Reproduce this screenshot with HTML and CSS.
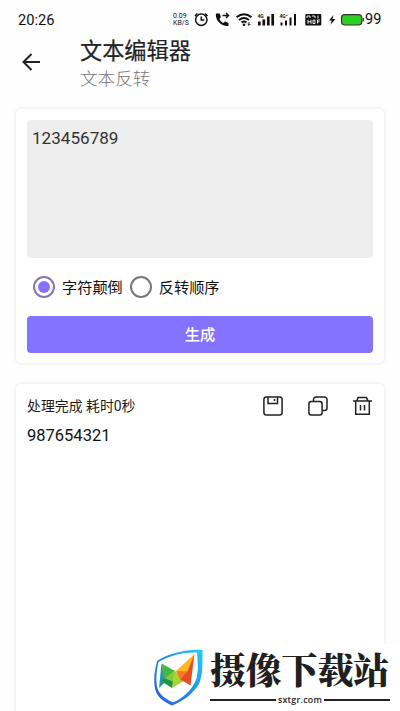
FILE: index.html
```html
<!DOCTYPE html>
<html lang="zh-CN">
<head>
<meta charset="utf-8">
<title>文本编辑器</title>
<link rel="stylesheet" href="styles.css">
</head>
<body>
<header class="status">
  <span class="time">20:26</span>
  <div class="speed"><span>0.09</span><span>KB/S</span></div>
  <svg class="indicators" width="175" height="20" viewBox="190 10 175 20" fill="none" stroke="#111" stroke-width="1.5">
    <circle cx="201.3" cy="19.8" r="5.7"/><path d="M201.3 16.500v3.600h3M195 16l2.400-2.500M207.500 16l-2.400-2.500"/>
    <path d="M216 13.500c-1.200 6.500 5 13 12.500 12.500v-3l-3.300-1.500-2 1.500c-1.800-.9-3-2.300-3.800-4l1.500-2-1.200-3.500z" fill="#111" stroke="none"/>
    <path d="M222.500 15.500h5.500M226 13l2.500 2.500-2.500 2.500"/>
    <path d="M236.500 17.200q7.500-6 15 0M239 20q5-4 10 0M241.500 22.600q2.500-2 5 0" stroke-width="1.900"/><circle cx="244" cy="24.700" r="1.300" fill="#111" stroke="none"/><path d="M249 22v3M247.600 24l1.400 1.400 1.400-1.400" stroke-width="1"/>
    <path d="M259.300 25.500v-4M263.800 25.500v-6M268.300 25.500v-9M272.700 25.500v-11.500" stroke-width="2.700"/>
    <path d="M281.500 25.500v-3M286 25.500v-5M290.500 25.500v-8M295 25.500v-11.500" stroke-width="2"/>
    <g fill="#111" stroke="none" class="tiny"><text x="257.500" y="18">4G</text><text x="279.500" y="18">4G⁺</text></g>
    <rect x="305.300" y="14" width="16" height="11.500" rx="1" fill="#111" stroke="none"/>
    <path d="M307 18v-2h3v2M312 16h3v2M318 15.500v3M308 19.800v4M311 19.800v4M308 21.800h3M313 20v3.500h2v-3.500zM320 20h-2.500v3.500M317.500 21.800h2" stroke="#fff" stroke-width=".9"/>
    <path d="M333.500 15l-4.500 5.500h2.700l-1.200 4.300 4.900-5.800h-2.900z" fill="#111" stroke="none"/>
    <rect x="341.500" y="14.600" width="20.300" height="10.400" rx="3.500" fill="#2fcc24" stroke="#333" stroke-width="1.200"/><path d="M363.300 18v3.500" stroke="#333" stroke-width="1.300"/>
  </svg>
  <span class="level">99</span>
</header>
<div class="appbar">
  <svg class="back" width="20" height="20" viewBox="0 0 20 20" fill="none" stroke="#222" stroke-width="2"><path d="M19 10H2.500M10.500 2L2.500 10l8 8"/></svg>
  <div><h1>文本编辑器</h1><h2>文本反转</h2></div>
</div>
<main>
  <section class="card form">
    <div class="input">123456789</div>
    <div class="options">
      <label class="option selected"><i class="radio"></i><span>字符颠倒</span></label>
      <label class="option"><i class="radio"></i><span>反转顺序</span></label>
    </div>
    <div class="generate">生成</div>
  </section>
  <section class="card result">
    <div class="resulthead">
      <span class="message">处理完成 耗时0秒</span>
      <div class="actions">
        <svg width="20" height="20" viewBox="0 0 20 20"><rect x=".9" y=".9" width="18.200" height="18.200" rx="2.500"/><path d="M5 1v6.500h9.500V1M11.500 3v2"/></svg>
        <svg width="20" height="20" viewBox="0 0 20 20"><rect x=".9" y="5.500" width="13.200" height="13.600" rx="2.500"/><path d="M5.500 5V3.500a2.500 2.500 0 0 1 2.500-2.500h8.500a2.500 2.500 0 0 1 2.500 2.500v8.500a2.500 2.500 0 0 1-2.500 2.500H14.500"/></svg>
        <svg width="20" height="20" viewBox="0 0 20 20"><path d="M0 5h19M4 4.500l1-3h8.500l1.300 3M2.700 5v13.300h13.600V5M7.500 9v5.500M11.500 9v5.500"/></svg>
      </div>
    </div>
    <div class="output">987654321</div>
  </section>
</main>
<div class="watermark">
  <svg class="shield" width="50" height="58" viewBox="153 649 50 58">
    <defs><linearGradient id="edge" x1="0" y1="1" x2="1" y2="0"><stop offset="0" stop-color="#2858e8"/><stop offset=".5" stop-color="#218fe8"/><stop offset="1" stop-color="#25cdf5"/></linearGradient></defs>
    <path fill="url(#edge)" fill-rule="evenodd" d="M202.500 650C186 649 170 653 157 661C153.500 675 153.500 684 156 692C159 699 165 702 172 705.500C183 701 192 695 199 684C203 675 202.500 662 202.500 650ZM197 652.500C198 664 198.500 673 196 680C191 691 183 698 173 702.500C166 699 161 696 158 690C155.500 682 156 673 158.500 662C171 655 184 652 197 652.500Z"/>
    <path fill="#2196b5" d="M161.500 663.500L165 678 159 688z"/>
    <path fill="#49b544" d="M161.500 663.500L175 671 164 680z"/>
    <path fill="#84cb3d" d="M164 679l11-9 2 8-5 9z"/>
    <path fill="#229449" d="M164 678L159 688l5-5 8 5 2-6z"/>
    <path fill="#a6d534" d="M174 670l10 11-12 7z"/>
    <path fill="#ffb51b" d="M194.500 654L176 671l13 3z"/>
    <path fill="#f57922" d="M176 671l15 .5-10 9.500z"/>
    <path fill="#e94b25" d="M194.500 654l-4 31.500-10-6 7-8z"/>
  </svg>
  <div class="brand">
    <div class="name">摄像下载站</div>
    <div class="domain"><span>sxtgr.com</span></div>
  </div>
</div>
</body>
</html>
```
FILE: styles.css
```css
* { box-sizing: border-box; }
body {
  margin: 0;
  height: 711px;
  overflow: hidden;
  position: relative;
  background: #fefefe;
  color: #1c1c1c;
  font-family: Roboto, "Noto Sans CJK SC", sans-serif;
}
.status { height: 38px; padding: 10px 18px 0; display: flex; }
.time { width: 155px; font-size: 14.700px; line-height: 20px; color: #111; }
.speed { width: 17px; padding-top: 3px; font-size: 7px; line-height: 7px; color: #111; }
.speed span { display: block; white-space: nowrap; }
.indicators { flex: none; }
.tiny { font-size: 5px; font-weight: 700; }
.level { font-size: 14.500px; line-height: 20px; color: #111; }
.appbar { height: 71px; padding-left: 21px; display: flex; }
.back { flex: none; margin: 14px 39px 0 0; }
h1, h2 { margin: 0; font-weight: 400; white-space: nowrap; }
h1 { font-size: 22.200px; line-height: 27px; color: #222; -webkit-text-stroke: .2px #222; }
h2 { font-size: 17.600px; line-height: 25px; font-family: "Noto Sans CJK SC", sans-serif; font-weight: 300; color: #777; }
main { padding: 0 16px; display: flex; flex-direction: column; gap: 21px; }
.card { background: #fff; border-radius: 5px; padding: 11px; box-shadow: 0 0 4px rgba(0, 0, 0, .12); }
.form { height: 254px; }
.input { height: 138px; padding: 7px 5px; border-radius: 4px; background: #eee; font-size: 17.100px; line-height: 22px; color: #333; }
.options { height: 58px; padding-left: 6px; display: flex; align-items: center; gap: 7px; }
.option { display: flex; align-items: center; gap: 7px; font-size: 15.200px; color: #111; }
.option span { margin-bottom: 2px; }
.radio { width: 22px; height: 22px; border: 2px solid #777; border-radius: 50%; display: flex; align-items: center; justify-content: center; }
.selected .radio { border-color: #8477b8; }
.selected .radio::after { content: ""; width: 12px; height: 12px; border-radius: 50%; background: #8473ff; }
.generate { height: 37px; padding-top: 1px; border-radius: 4px; background: #8473ff; color: #fff; text-align: center; font-size: 15.200px; line-height: 37px; font-weight: 500; }
.result { height: 340px; }
.resulthead { height: 22px; display: flex; justify-content: space-between; align-items: center; font-size: 13.900px; }
.message { margin-bottom: 3px; }
.actions { display: flex; gap: 25px; }
.actions svg { fill: none; stroke: #222; stroke-width: 1.500; }
.output { margin-top: 8px; font-size: 16.500px; line-height: 22px; color: #111; }
.watermark { position: absolute; left: 150px; top: 644px; width: 250px; height: 67px; background: #fff; display: flex; }
.shield { flex: none; margin: 5px 7px 0 3px; }
.brand { width: 180px; }
.name { height: 47px; font-family: "Noto Serif CJK SC", "Noto Sans CJK SC", serif; font-size: 35.800px; line-height: 50px; font-weight: 900; color: #202020; white-space: nowrap; }
.domain { display: flex; align-items: center; gap: 2px; height: 17px; font: 600 8.800px/12px "Open Sans", sans-serif; letter-spacing: .25px; color: #222; }
.domain::before, .domain::after { content: ""; height: 2px; flex: 1; background: #222; }
```
